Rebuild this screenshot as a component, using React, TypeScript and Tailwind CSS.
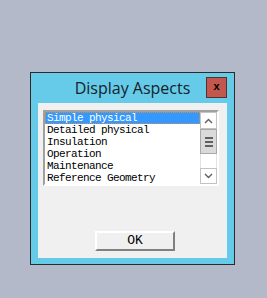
const aspects = [
  "Simple physical",
  "Detailed physical",
  "Insulation",
  "Operation",
  "Maintenance",
  "Reference Geometry",
];

const mono = "font-['Liberation_Mono',monospace]";

function ScrollBar() {
  return (
    <div className="flex w-[17px] flex-col bg-white">
      <div className="flex h-[17px] items-center justify-center border border-[#c3c3c3] bg-white">
        <svg width="9" height="6" viewBox="0 0 9 6">
          <path d="M1 5 L4.5 1.5 L8 5" fill="none" stroke="#606060" strokeWidth="1.4" />
        </svg>
      </div>
      <div className="flex h-[25px] flex-col items-center justify-center gap-[2px] border border-[#a8a8a8] bg-[#dadada]">
        <div className="h-[2px] w-[8px] bg-[#606060]" />
        <div className="h-[2px] w-[8px] bg-[#606060]" />
        <div className="h-[2px] w-[8px] bg-[#606060]" />
      </div>
      <div className="flex-1 border-x border-[#e3e3e3]" />
      <div className="flex h-[16px] items-center justify-center border border-[#c3c3c3] bg-white">
        <svg width="9" height="6" viewBox="0 0 9 6">
          <path d="M1 1 L4.5 4.5 L8 1" fill="none" stroke="#606060" strokeWidth="1.4" />
        </svg>
      </div>
    </div>
  );
}

export default function App() {
  return (
    <div className="h-[298px] w-[267px] bg-[#b3b9c9] pl-[30px] pt-[72px]">
      <div className="flex h-[193px] w-[205px] flex-col border border-[#2b2b2b] bg-[#66cbe9]">
        <div className="flex h-[30px] items-start px-[7px] pt-[4px]">
          <div className="w-[21px]" />
          <div className="flex-1 pt-[1px] text-center font-['Open_Sans',sans-serif] text-[16px] leading-[21px] text-[#14222a]">
            Display Aspects
          </div>
          <div className="flex h-[21px] w-[21px] items-center justify-center border border-[#55302c] bg-[#c2574e]">
            <span className={`${mono} text-[11px] font-bold leading-none text-black`}>x</span>
          </div>
        </div>
        <div className="mx-[7px] flex h-[155px] flex-col bg-[#f0f0f0] pl-[5px] pt-[7px]">
          <div className="flex h-[76px] w-[176px] border-2 border-b-white border-l-[#a0a0a0] border-r-white border-t-[#a0a0a0] bg-white">
            <div className="flex w-[155px] flex-col">
              {aspects.map((a, i) => (
                <div
                  key={a}
                  className={`h-[12px] pl-[2px] ${mono} text-[11px] leading-[12px] tracking-[-0.6px] whitespace-nowrap ${
                    i === 0
                      ? "bg-[#3399ff] text-white outline-1 outline-dotted outline-offset-[-1px] outline-[#e08a3c]"
                      : "text-black"
                  }`}
                >
                  {a}
                </div>
              ))}
            </div>
            <ScrollBar />
          </div>
          <button
            className={`ml-[52px] mt-[45px] flex h-[20px] w-[80px] items-center justify-center border-2 border-b-[#808080] border-l-white border-r-[#808080] border-t-white bg-[#f0f0f0] ${mono} text-[13px] text-black`}
          >
            OK
          </button>
        </div>
      </div>
    </div>
  );
}
